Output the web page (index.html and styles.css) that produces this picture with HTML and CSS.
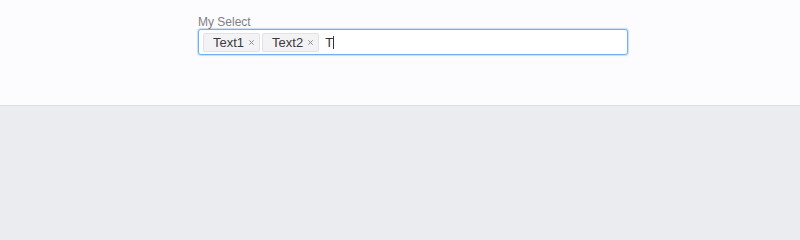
FILE: index.html
```html
<!DOCTYPE html>
<html>
<head>
<meta charset="utf-8">
<link rel="stylesheet" href="styles.css">
</head>
<body>
<div class="top">
  <div class="field">
    <div class="label">My Select</div>
    <div class="select">
      <span class="tag"><span class="tag-text">Text1</span><svg class="tag-x" width="5" height="5" viewBox="0 0 5 5"><path d="M0.3 0.3L4.7 4.7M4.7 0.3L0.3 4.7" stroke="#8a8a8e" stroke-width="1"/></svg></span>
      <span class="tag"><span class="tag-text">Text2</span><svg class="tag-x" width="5" height="5" viewBox="0 0 5 5"><path d="M0.3 0.3L4.7 4.7M4.7 0.3L0.3 4.7" stroke="#8a8a8e" stroke-width="1"/></svg></span>
      <span class="input">T<span class="caret"></span></span>
    </div>
  </div>
</div>
<div class="bottom"></div>
</body>
</html>
```
FILE: styles.css
```css
html, body {
  margin: 0;
  padding: 0;
  font-family: "Liberation Sans", Arial, sans-serif;
  background: #ebecef;
}
.top {
  background: #fcfbfe;
  height: 106px;
  border-bottom: 1px solid #dddee2;
  padding-top: 15px;
  box-sizing: border-box;
}
.field {
  margin-left: 198px;
  width: 430px;
}
.label {
  font-size: 12px;
  line-height: 14px;
  color: #7f7f85;
}
.select {
  box-sizing: border-box;
  height: 26px;
  border: 1px solid #6fb2ee;
  border-radius: 3px;
  box-shadow: 0 0 1px 1px rgba(120, 180, 240, 0.4);
  background: #ffffff;
  display: flex;
  align-items: center;
  padding: 0 4px;
  gap: 2px;
}
.tag {
  box-sizing: border-box;
  height: 19px;
  display: flex;
  align-items: center;
  background: #f3f3f5;
  border: 1px solid #e2e2e5;
  border-radius: 2px;
  padding: 0 5px 0 9px;
  font-size: 13px;
  color: #3a3a3e;
}
.tag-x {
  margin-left: 5px;
  display: block;
}
.input {
  margin-left: 4px;
  font-size: 13px;
  color: #333;
  display: flex;
  align-items: center;
}
.caret {
  display: inline-block;
  width: 1px;
  height: 13px;
  background: #333;
  margin-left: 0;
}
.bottom {
  height: 132px;
  background: #ebecef;
}
```
